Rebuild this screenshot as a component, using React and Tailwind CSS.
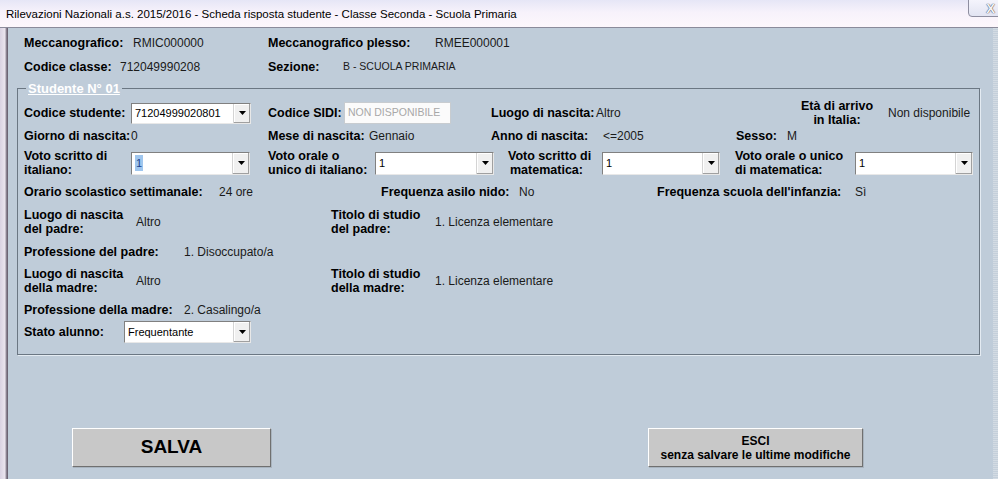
import React from 'react';

function Arrow() {
  return (
    <div className="w-[17px] shrink-0 flex items-center justify-center bg-[#f0f0f0] border-l border-[#d4d4d4] shadow-[inset_-1px_-1px_0_#a0a0a0,inset_1px_1px_0_#ffffff]">
      <svg width="7" height="4" viewBox="0 0 7 4">
        <path d="M0 0 H7 L3.5 4 Z" fill="#000" />
      </svg>
    </div>
  );
}

function Combo({ className, value, selected }) {
  return (
    <div className={`flex shrink-0 bg-white border border-[#808080] border-r-[#e8e8e8] border-b-[#e8e8e8] ${className}`}>
      <div className="flex-1 flex items-center pl-[3px] text-[11px] text-black">
        {selected ? (
          <span className="bg-[#9fc6ee] text-[#1c3f8a] px-[1px]">{value}</span>
        ) : (
          value
        )}
      </div>
      <Arrow />
    </div>
  );
}

function Label({ className = '', children }) {
  return <div className={`shrink-0 font-bold text-[12.5px] leading-[14px] text-black ${className}`}>{children}</div>;
}

function Val({ className = '', children }) {
  return <div className={`shrink-0 text-[12px] text-[#1a1a1a] ${className}`}>{children}</div>;
}

export default function App() {
  return (
    <div className="w-[998px] h-[479px] overflow-hidden flex flex-col font-['Liberation_Sans',Arial,sans-serif] bg-[#bfccd9]">
      {/* Title bar */}
      <div className="h-[28px] shrink-0 flex items-start border-b border-[#8b8b9b] bg-[linear-gradient(180deg,#e6e6f6_0%,#f7f2fb_45%,#fdf7fc_100%)]">
        <div className="pl-[6px] pt-[6px] text-[11.5px] text-black flex-1 min-w-0 whitespace-nowrap overflow-hidden">
          Rilevazioni Nazionali a.s. 2015/2016 - Scheda risposta studente - Classe Seconda - Scuola Primaria
        </div>
        <div className="w-[36px] h-[18px] shrink-0 mt-[-1px] mr-[-6px] rounded-bl-[4px] border border-[#8e8ea0] bg-[linear-gradient(180deg,#f4f4fc,#e2e4f2)] flex items-center justify-end pr-[8px]">
          <span className="text-[13px] leading-none text-[#f4f4f8] font-bold [text-shadow:0_0_1px_#44444f,0_0_1px_#44444f]">X</span>
        </div>
      </div>

      <div className="flex-1 flex">
        {/* left frame */}
        <div className="w-[8px] shrink-0 bg-[linear-gradient(90deg,#d9d2e2,#eae4ee_60%,#6c6474_88%)]" />

        {/* main */}
        <div className="flex-1 flex flex-col">
          {/* header */}
          <div className="pl-[16px] pt-[6px] flex flex-col gap-[6px]">
            <div className="h-[18px] flex items-center">
              <Label className="w-[109px]">Meccanografico:</Label>
              <Val className="w-[135px]">RMIC000000</Val>
              <Label className="w-[167px]">Meccanografico plesso:</Label>
              <Val>RMEE000001</Val>
            </div>
            <div className="h-[18px] flex items-center">
              <Label className="w-[96px]">Codice classe:</Label>
              <Val className="w-[148px]">712049990208</Val>
              <Label className="w-[75px]">Sezione:</Label>
              <div className="text-[10.5px] text-[#1a1a1a]">B - SCUOLA PRIMARIA</div>
            </div>
          </div>

          {/* student fieldset */}
          <fieldset className="ml-[9px] mr-[13px] mt-[5px] border border-[#6b7783] shadow-[1px_1px_0_#e4ebf2] px-[6px] pb-[11px]">
            <legend className="ml-[2px] px-[2px] text-[13px] leading-[15px] font-bold text-white underline">Studente N° 01</legend>

            {/* row A */}
            <div className="h-[22px] mt-[6px] flex items-center">
              <Label className="w-[107px]">Codice studente:</Label>
              <Combo className="w-[120px] h-[21px]" value="71204999020801" />
              <div className="w-[17px] shrink-0" />
              <Label className="w-[76px]">Codice SIDI:</Label>
              <div className="w-[107px] h-[22px] shrink-0 flex items-center pl-[3px] bg-[#fbfbfb] border border-[#c8ccd0] text-[10.5px] text-[#a8a8a8]">NON DISPONIBILE</div>
              <div className="w-[40px] shrink-0" />
              <Label className="w-[105px]">Luogo di nascita:</Label>
              <Val className="w-[204px] text-[11.5px]">Altro</Val>
              <Label className="w-[74px] text-center leading-[13px]">Età di arrivo<br />in Italia:</Label>
              <div className="w-[14px] shrink-0" />
              <Val>Non disponibile</Val>
            </div>

            {/* row B */}
            <div className="h-[18px] mt-[3px] flex items-center">
              <Label className="w-[107px]">Giorno di nascita:</Label>
              <Val className="w-[137px]">0</Val>
              <Label className="w-[101px]">Mese di nascita:</Label>
              <Val className="w-[122px]">Gennaio</Val>
              <Label className="w-[112px]">Anno di nascita:</Label>
              <Val className="w-[133px]">&lt;=2005</Val>
              <Label className="w-[51px]">Sesso:</Label>
              <Val>M</Val>
            </div>

            {/* row C */}
            <div className="h-[26px] mt-[5px] flex items-center">
              <Label className="w-[107px] leading-[14px]">Voto scritto di<br />italiano:</Label>
              <Combo className="w-[119px] h-[23px]" value="1" selected />
              <div className="w-[18px] shrink-0" />
              <Label className="w-[107px] leading-[14px]">Voto orale o<br />unico di italiano:</Label>
              <Combo className="w-[119px] h-[23px]" value="1" />
              <div className="w-[14px] shrink-0" />
              <Label className="w-[94px] leading-[14px]">Voto scritto di<br /><span className="pl-[2px]">matematica:</span></Label>
              <Combo className="w-[118px] h-[23px]" value="1" />
              <div className="w-[15px] shrink-0" />
              <Label className="w-[120px] leading-[14px]">Voto orale o unico<br />di matematica:</Label>
              <Combo className="w-[118px] h-[23px]" value="1" />
            </div>

            {/* row D */}
            <div className="h-[18px] mt-[7px] flex items-center">
              <Label className="w-[195px]">Orario scolastico settimanale:</Label>
              <Val className="w-[162px]">24 ore</Val>
              <Label className="w-[138px]">Frequenza asilo nido:</Label>
              <Val className="w-[138px]">No</Val>
              <Label className="w-[198px]">Frequenza scuola dell'infanzia:</Label>
              <Val>Sì</Val>
            </div>

            {/* row E */}
            <div className="h-[28px] mt-[7px] flex items-center">
              <Label className="w-[112px] leading-[14px]">Luogo di nascita<br />del padre:</Label>
              <Val className="w-[195px] text-[11.5px]">Altro</Val>
              <Label className="w-[104px] leading-[14px]">Titolo di studio<br />del padre:</Label>
              <Val>1. Licenza elementare</Val>
            </div>

            {/* row F */}
            <div className="h-[18px] mt-[7px] flex items-center">
              <Label className="w-[160px]">Professione del padre:</Label>
              <Val>1. Disoccupato/a</Val>
            </div>

            {/* row G */}
            <div className="h-[28px] mt-[6px] flex items-center">
              <Label className="w-[112px] leading-[14px]">Luogo di nascita<br />della madre:</Label>
              <Val className="w-[195px] text-[11.5px]">Altro</Val>
              <Label className="w-[104px] leading-[14px]">Titolo di studio<br />della madre:</Label>
              <Val>1. Licenza elementare</Val>
            </div>

            {/* row H */}
            <div className="h-[18px] mt-[6px] flex items-center">
              <Label className="w-[160px]">Professione della madre:</Label>
              <Val>2. Casalingo/a</Val>
            </div>

            {/* row I */}
            <div className="h-[22px] mt-[2px] flex items-center">
              <Label className="w-[100px]">Stato alunno:</Label>
              <Combo className="w-[127px] h-[22px]" value="Frequentante" />
            </div>
          </fieldset>

          {/* buttons */}
          <div className="mt-[73px] flex items-start">
            <button className="ml-[64px] w-[199px] h-[39px] bg-[#c8c8c8] border border-t-white border-l-white border-r-[#707070] border-b-[#707070] shadow-[1px_1px_0_#a9b4bf] font-bold text-[19px] text-black">
              SALVA
            </button>
            <button className="ml-[377px] w-[215px] h-[39px] bg-[#c8c8c8] border border-t-white border-l-white border-r-[#707070] border-b-[#707070] shadow-[1px_1px_0_#a9b4bf] font-bold text-[12px] leading-[14px] text-black">
              ESCI<br />senza salvare le ultime modifiche
            </button>
          </div>
        </div>

        {/* right edge */}
        <div className="w-[5px] shrink-0 bg-[repeating-linear-gradient(180deg,#d3dbe3_0px,#d3dbe3_1px,#c4cfda_1px,#c4cfda_2px)]" />
      </div>
    </div>
  );
}
